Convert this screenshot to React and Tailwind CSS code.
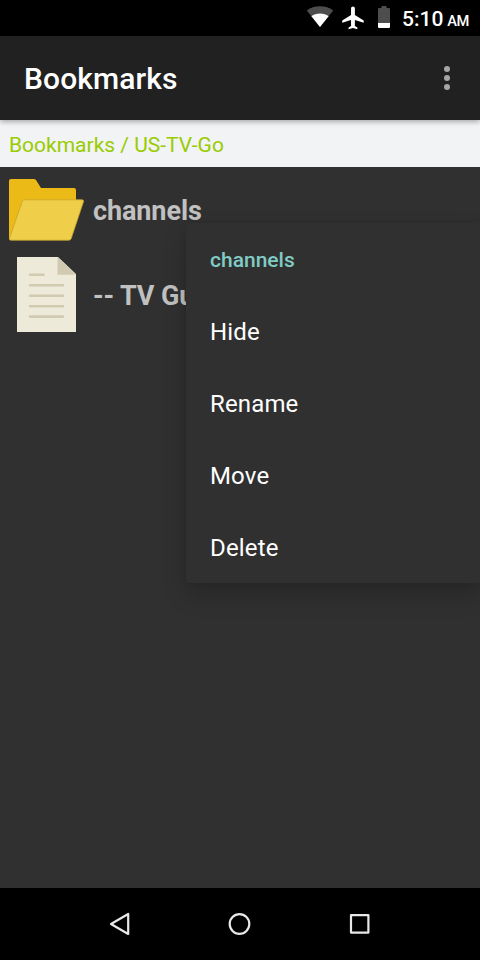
function WifiIcon() {
  return (
    <svg width="28" height="22" viewBox="306 6 28 22">
      <path d="M306.8 10.4C310.8 7.6 315 6.2 320 6.2s9.2 1.4 13.2 4.2L320 27Z" fill="#4d4d4d" />
      <path d="M311.4 16.2C313.8 14.4 316.6 13.6 320 13.6s6.2.8 8.6 2.6L320 27Z" fill="#fff" />
    </svg>
  );
}

function PlaneIcon() {
  return (
    <svg width="24" height="24" viewBox="341 6 24 24">
      <path
        transform="translate(339.4 4.3) scale(1.13)"
        d="M21.5 16.3v-2l-7.8-4.9V3.6C13.7 2.6 13 1.9 12 1.9s-1.7.7-1.7 1.7v5.8l-7.8 4.9v2l7.8-2.4v5.2l-2.2 1.5v1.4l3.9-1.1 3.9 1.1v-1.4l-2.2-1.5v-5.2Z"
        fill="#fff"
      />
    </svg>
  );
}

function BatteryIcon() {
  return (
    <svg width="12" height="22" viewBox="0 0 12 22">
      <path d="M3.5 0h5v2H11q1 0 1 1v14H0V3q0-1 1-1h2.5Z" fill="#4d4d4d" />
      <path d="M0 17h12v4q0 1-1 1H1q-1 0-1-1Z" fill="#fff" />
    </svg>
  );
}

function FolderIcon() {
  return (
    <svg width="76" height="62" viewBox="9 179 76 62">
      <path d="M9 181q0-2 2-2h23q1 0 2 1l5 8h33q2 0 2 2v11h-3v30L11 240q-2 0-2-2Z" fill="#ebba16" />
      <path d="M24.2 199.8h57.8q2 0 1.5 1.8L71.2 238.5q-.6 1.7-2.4 1.7H11q-2 0-1.5-1.8L22.2 201.5q.6-1.7 2-1.7Z" fill="#efce4a" stroke="#c9a52c" strokeWidth="0.8" />
    </svg>
  );
}

function FileIcon() {
  return (
    <svg width="59" height="75" viewBox="17 257 59 75">
      <path d="M17 257h41l18 17v58H17Z" fill="#edead9" />
      <path d="M57.5 257 76 274.7H57.5Z" fill="#d1cab1" />
      <path d="M30 274.8h13.5M30 285.3h33M30 295.8h33M30 306.2h33M30 316.6h33" stroke="#cfcab0" strokeWidth="2.6" strokeLinecap="round" />
    </svg>
  );
}

const actions = ["Hide", "Rename", "Move", "Delete"];

export default function App() {
  return (
    <div className="relative flex h-[960px] w-[480px] flex-col overflow-hidden bg-[#303030] font-['Roboto',sans-serif]">
      <div className="flex h-9 shrink-0 items-start bg-black pl-[306px] text-white">
        <div className="pt-1.5"><WifiIcon /></div>
        <div className="ml-[7px] pt-1.5"><PlaneIcon /></div>
        <div className="ml-[13px] pt-1.5"><BatteryIcon /></div>
        <div className="ml-3 flex items-baseline whitespace-nowrap pt-[3px] font-medium">
          <span className="text-[21px] leading-8">5:10</span>
          <span className="ml-1 text-[14.7px] tracking-[-0.5px]">AM</span>
        </div>
      </div>
      <header className="z-10 flex h-[84px] shrink-0 items-center justify-between bg-[#212121] pl-6 pr-[30px] shadow-[0_2px_5px_rgba(0,0,0,0.3)]">
        <h1 className="pt-0.5 text-[30px] font-medium leading-9 tracking-[0.1px] text-white">Bookmarks</h1>
        <div className="flex flex-col gap-[3px]">
          <span className="size-1.5 rounded-full bg-[#a6a6a6]" />
          <span className="size-1.5 rounded-full bg-[#a6a6a6]" />
          <span className="size-1.5 rounded-full bg-[#a6a6a6]" />
        </div>
      </header>
      <div className="flex h-[47px] shrink-0 items-center bg-[#f1f3f5] pl-[9px] text-[21px] text-[#99cc00]">
        <span className="pt-1">Bookmarks / US-TV-Go</span>
      </div>
      <main className="flex-1 text-[27px] font-bold tracking-[-0.1px] text-[#c1c1c1]">
        <div className="flex h-[85px] items-center pl-[9px]">
          <FolderIcon />
          <span className="ml-2 pt-1">channels</span>
        </div>
        <div className="flex h-[85px] items-center pl-[17px]">
          <FileIcon />
          <span className="ml-[17px] pt-1">-- TV Guide</span>
        </div>
      </main>
      <div className="absolute left-[186px] top-[223px] flex w-[294px] flex-col rounded-[3px] bg-[#303030] text-2xl tracking-[0.15px] text-white shadow-[0_12px_24px_rgba(0,0,0,0.2),0_0_6px_rgba(0,0,0,0.08)]">
        <div className="flex h-[72px] items-center pl-6 pt-0.5 text-[21px] font-medium tracking-normal text-[#80cbc4]">channels</div>
        {actions.map((a) => (
          <div key={a} className="flex h-[72px] items-center pl-6 pt-0.5">{a}</div>
        ))}
      </div>
      <nav className="flex h-[72px] shrink-0 items-center bg-black pl-[108px]">
        <svg width="264" height="24" viewBox="108 912 264 24" fill="none" stroke="#e8e8e8" strokeWidth="2.2" strokeLinejoin="round">
          <path d="M111 924 128.2 914v20Z" />
          <circle cx="239.5" cy="924" r="9.8" />
          <rect x="351" y="915.2" width="17.4" height="17.4" />
        </svg>
      </nav>
    </div>
  );
}
